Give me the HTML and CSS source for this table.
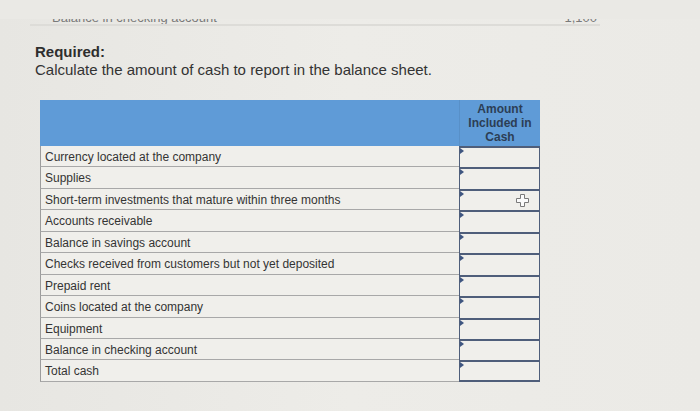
FILE: index.html
```html
<!DOCTYPE html>
<html>
<head>
<meta charset="utf-8">
<link rel="stylesheet" href="styles.css">
</head>
<body>
<div class="page">
  <div class="prev">
    <div class="prev-row">
      <span class="prev-label">Balance in checking account</span>
      <span class="prev-val">1,100</span>
    </div>
  </div>
  <div class="prev-line"></div>

  <div class="req">
    <div class="req-title">Required:</div>
    <div class="req-text">Calculate the amount of cash to report in the balance sheet.</div>
  </div>

  <div class="sheet">
    <div class="head">
      <div class="head-label"></div>
      <div class="head-amt">Amount<br>Included in<br>Cash</div>
    </div>
    <div class="row"><div class="lbl">Currency located at the company</div><div class="amt"></div></div>
    <div class="row"><div class="lbl">Supplies</div><div class="amt"></div></div>
    <div class="row"><div class="lbl">Short-term investments that mature within three months</div><div class="amt"><span class="cursor"><svg width="13" height="13" viewBox="0 0 13 13"><path d="M4.5 0.5h4v4h4v4h-4v4h-4v-4h-4v-4h4z" fill="#fbfbfb" stroke="#7a7a7a" stroke-width="1"/></svg></span></div></div>
    <div class="row"><div class="lbl">Accounts receivable</div><div class="amt"></div></div>
    <div class="row"><div class="lbl">Balance in savings account</div><div class="amt"></div></div>
    <div class="row"><div class="lbl">Checks received from customers but not yet deposited</div><div class="amt"></div></div>
    <div class="row"><div class="lbl">Prepaid rent</div><div class="amt"></div></div>
    <div class="row"><div class="lbl">Coins located at the company</div><div class="amt"></div></div>
    <div class="row"><div class="lbl">Equipment</div><div class="amt"></div></div>
    <div class="row"><div class="lbl">Balance in checking account</div><div class="amt"></div></div>
    <div class="row last"><div class="lbl">Total cash</div><div class="amt"></div></div>
  </div>
</div>
</body>
</html>
```

FILE: styles.css
```css
html, body {
  margin: 0;
  padding: 0;
  background: #eae9e5;
}
body {
  width: 700px;
  height: 411px;
  overflow: hidden;
  font-family: "Liberation Sans", Arial, sans-serif;
  color: #333;
}
.page {
  background: linear-gradient(90deg, #e7e6e2 0%, #edece8 50%, #ebeae6 100%);
  height: 411px;
}
.prev {
  height: 5px;
  margin-top: 19px;
  overflow: hidden;
  display: flex;
  align-items: flex-end;
  padding-left: 52px;
  width: 545px;
}
.prev-row {
  display: flex;
  justify-content: space-between;
  width: 100%;
  font-size: 13px;
  line-height: 13px;
  height: 13px;
  color: #7a7a7a;
}
.prev-line {
  height: 2px;
  margin-left: 30px;
  width: 570px;
  background: #dddcd8;
}
.req {
  padding: 17px 0 0 35px;
}
.req-title {
  font-weight: bold;
  font-size: 15px;
  line-height: 18px;
  color: #2e2e2e;
}
.req-text {
  font-size: 15px;
  line-height: 18px;
  color: #333;
}
.sheet {
  margin: 21px 0 0 40px;
  width: 500px;
}
.head {
  display: flex;
  height: 46px;
  background: #5f9bd7;
}
.head-label {
  flex: 1;
  border-right: 1px solid #5890c8;
}
.head-amt {
  width: 80px;
  text-align: center;
  font-weight: bold;
  font-size: 12px;
  line-height: 14px;
  padding-top: 2px;
  color: #2c3e55;
}
.row {
  display: flex;
  height: 21.45px;
}
.lbl {
  flex: 1;
  box-sizing: border-box;
  border-left: 1px solid #9c9c9c;
  border-bottom: 1px solid #a8a8a8;
  background: #f0efeb;
  font-size: 12px;
  line-height: 20px;
  padding: 1px 0 0 4px;
  color: #343434;
  white-space: nowrap;
}
.amt {
  position: relative;
  width: 81px;
  box-sizing: border-box;
  border-top: 2px solid #4f5e7a;
  border-left: 1.5px solid #4f5e7a;
  border-right: 1.5px solid #4f5e7a;
  background: #f0efeb;
}
.amt::before {
  content: "";
  position: absolute;
  left: 0;
  top: 0;
  border-top: 3px solid transparent;
  border-bottom: 3px solid transparent;
  border-left: 4px solid #3f5680;
}
.row.last .amt {
  border-bottom: 2px solid #4f5e7a;
}
.cursor {
  position: absolute;
  left: 56px;
  top: 3px;
  line-height: 0;
}
```
